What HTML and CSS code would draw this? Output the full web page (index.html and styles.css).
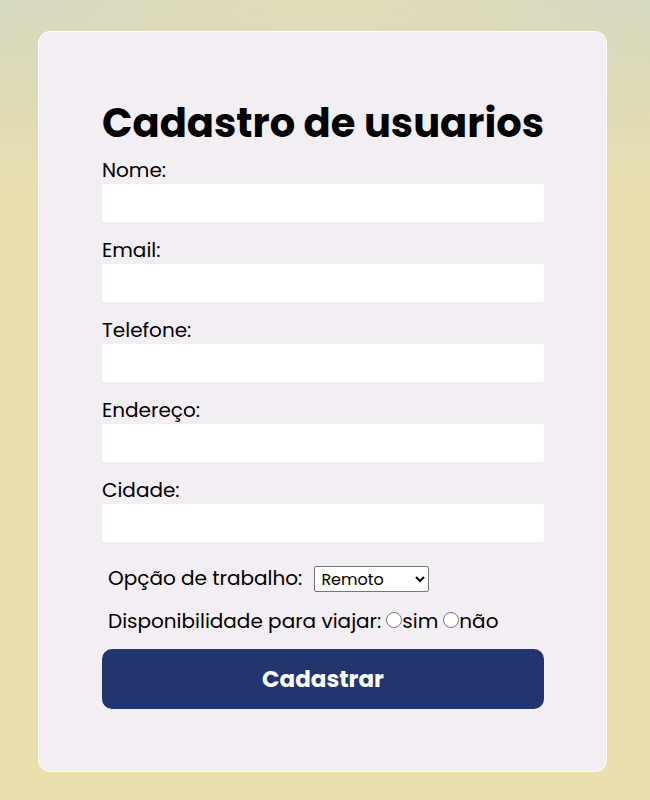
FILE: index.html
```html
<!DOCTYPE html>
<html lang="pt">
<head>
<meta charset="utf-8">
<title>Cadastro de usuarios</title>
<link rel="stylesheet" href="styles.css">
</head>
<body>
<div class="card">
  <h1 class="title">Cadastro de usuarios</h1>
  <form class="form">
    <label class="field-label" for="nome">Nome:</label>
    <input class="field" id="nome" type="text">
    <label class="field-label" for="email">Email:</label>
    <input class="field" id="email" type="email">
    <label class="field-label" for="tel">Telefone:</label>
    <input class="field" id="tel" type="tel">
    <label class="field-label" for="end">Endereço:</label>
    <input class="field" id="end" type="text">
    <label class="field-label" for="cid">Cidade:</label>
    <input class="field" id="cid" type="text">
    <div class="row select-row">
      <label class="row-label" for="op">Opção de trabalho:</label>
      <select class="select" id="op">
        <option>Remoto</option>
        <option>Presencial</option>
        <option>Híbrido</option>
      </select>
    </div>
    <div class="row radio-row">Disponibilidade para viajar:<input class="radio" type="radio" name="v" id="sim"><label for="sim">sim</label><input class="radio" type="radio" name="v" id="nao"><label for="nao">não</label></div>
    <button class="btn" type="button">Cadastrar</button>
  </form>
</div>
</body>
</html>
```

FILE: styles.css
```css
html, body {
  margin: 0;
  padding: 0;
}
body {
  min-height: 800px;
  font-family: "Poppins", "DejaVu Sans", sans-serif;
  background:
    radial-gradient(ellipse 360px 160px at 325px 0px, rgba(228, 221, 184, 0.85), rgba(228, 221, 184, 0) 100%),
    linear-gradient(to bottom, #d4d8c0 0px, #dddab8 80px, #e6ddb2 160px, #ecdfae 230px, #ecdfae 100%);
  padding: 31px 0 28px 38px;
  box-sizing: border-box;
}
.card {
  width: 569px;
  box-sizing: border-box;
  background: #f3eef4;
  border: 1px solid #ffffff;
  border-radius: 12px;
  padding: 63px 62px 62px 63px;
}
.title {
  margin: 0 0 5px 0;
  font-size: 40px;
  font-weight: 700;
  line-height: 56px;
  color: #000;
}
.form {
  display: flex;
  flex-direction: column;
}
.field-label {
  font-size: 20px;
  line-height: 28px;
  color: #000;
}
.field {
  height: 38px;
  border: none;
  border-radius: 3px;
  background: #fff;
  margin: 0 0 14px 0;
  padding: 0 8px;
  box-sizing: border-box;
  width: 100%;
}
.row {
  padding-left: 6px;
  font-size: 20px;
  line-height: 30px;
  height: 30px;
  color: #000;
}
.select-row {
  display: flex;
  align-items: baseline;
  margin-top: 7px;
}
.row-label {
  margin-right: 12px;
}
.select {
  width: 115px;
  height: 26px;
  padding: 0 2px;
  font-family: "Poppins", "DejaVu Sans", sans-serif;
  font-size: 16px;
  border: 1px solid #767676;
  border-radius: 2px;
  background: #fff;
  color: #000;
}
.radio-row {
  display: block;
  margin-top: 13px;
}
.radio {
  width: 16px;
  height: 16px;
  margin: 0 0 0 5px;
}
.btn {
  margin-top: 13px;
  height: 60px;
  border: none;
  border-radius: 10px;
  background: #22356f;
  color: #fff;
  font-family: "Poppins", "DejaVu Sans", sans-serif;
  font-size: 23px;
  font-weight: 700;
}
```
